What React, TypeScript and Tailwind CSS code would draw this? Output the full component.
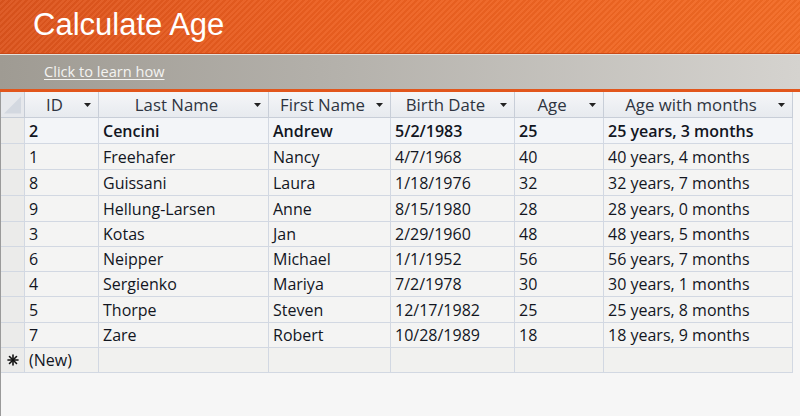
import React from "react";

const rows = [
  ["2", "Cencini", "Andrew", "5/2/1983", "25", "25 years, 3 months"],
  ["1", "Freehafer", "Nancy", "4/7/1968", "40", "40 years, 4 months"],
  ["8", "Guissani", "Laura", "1/18/1976", "32", "32 years, 7 months"],
  ["9", "Hellung-Larsen", "Anne", "8/15/1980", "28", "28 years, 0 months"],
  ["3", "Kotas", "Jan", "2/29/1960", "48", "48 years, 5 months"],
  ["6", "Neipper", "Michael", "1/1/1952", "56", "56 years, 7 months"],
  ["4", "Sergienko", "Mariya", "7/2/1978", "30", "30 years, 1 months"],
  ["5", "Thorpe", "Steven", "12/17/1982", "25", "25 years, 8 months"],
  ["7", "Zare", "Robert", "10/28/1989", "18", "18 years, 9 months"],
];
const heights = [26, 26, 26, 26, 25, 25, 25, 26, 25, 25];
const headers = ["ID", "Last Name", "First Name", "Birth Date", "Age", "Age with months"];

function Arrow() {
  return (
    <svg width="7" height="4" viewBox="0 0 7 4" className="shrink-0">
      <path d="M0 0H7L3.5 4Z" fill="#222" />
    </svg>
  );
}

export default function App() {
  const font = { fontFamily: '"Open Sans", "Noto Sans", sans-serif' };
  return (
    <div className="w-[800px] h-[416px] overflow-hidden bg-[#f6f6f6] flex flex-col" style={font}>
      <div className="h-[54px] shrink-0 flex items-center pl-[33px] bg-[repeating-linear-gradient(135deg,rgba(255,255,255,0.05)_0px,rgba(255,255,255,0.05)_2px,rgba(0,0,0,0.03)_2px,rgba(0,0,0,0.03)_4px),linear-gradient(90deg,#dc541d,#ec5f20_40%,#f26a24)] border-b border-[#c84a18]">
        <span className="text-white text-[31px] leading-none pb-[4px]" style={{ fontFamily: '"Liberation Sans", Arial, sans-serif' }}>
          Calculate Age
        </span>
      </div>
      <div className="h-[35px] shrink-0 border-t border-[#e4e2de] bg-[linear-gradient(90deg,#9f9b93,#b3b0aa_40%,#d5d3cf)] flex items-center pl-[44px]">
        <span className="text-[#f4f4f2] text-[14.6px] underline underline-offset-2 leading-none pb-[2px]">Click to learn how</span>
      </div>
      <div className="h-[3px] shrink-0 bg-[#e2561c]" />
      <div className="flex-1 border-l border-[#9a9a9a] relative">
        <div className="grid grid-cols-[24px_74px_170px_122px_124px_89px_189px] w-[792px]">
          <div className="h-[26px] bg-[#e6e8ec] border-r border-b border-[#c6ccd6] flex items-end justify-end p-[3px]">
            <svg width="18" height="18" viewBox="0 0 18 18">
              <path d="M18 0V18H0Z" fill="#d3d8e0" />
            </svg>
          </div>
          {headers.map((h) => (
            <div
              key={h}
              className="h-[26px] bg-[linear-gradient(180deg,#f5f6f8,#e7eaef)] border-r border-b border-[#c8ced8] flex items-center pr-[7px] text-[16.8px] text-[#2e3440] whitespace-nowrap"
            >
              <span className="flex-1 text-center">{h}</span>
              <Arrow />
            </div>
          ))}
          {rows.map((r, i) => (
            <React.Fragment key={i}>
              <div
                className="bg-[#ebebea] border-r border-b border-[#d2d8e2]"
                style={{ height: heights[i] }}
              />
              {r.map((c, j) => (
                <div
                  key={j}
                  className={`border-r border-b border-[#d2d8e2] flex items-center pl-[4px] text-[16px] text-[#12161f] whitespace-nowrap overflow-hidden ${i === 0 ? "font-semibold bg-[#f3f5f8]" : "bg-[#f4f4f3]"}`}
                  style={{ height: heights[i] }}
                >
                  {c}
                </div>
              ))}
            </React.Fragment>
          ))}
          <div className="h-[25px] bg-[#ebebea] border-r border-b border-[#d2d8e2] flex items-center justify-center">
            <svg width="12" height="12" viewBox="0 0 12 12">
              <g stroke="#111" strokeWidth="1.6" strokeLinecap="round">
                <path d="M6 1V11" />
                <path d="M1 6H11" />
                <path d="M2.5 2.5L9.5 9.5" />
                <path d="M9.5 2.5L2.5 9.5" />
              </g>
            </svg>
          </div>
          <div className="h-[25px] bg-[#f1f1ef] border-r border-b border-[#d2d8e2] flex items-center pl-[4px] text-[16px] text-[#12161f]">
            (New)
          </div>
          {[0, 1, 2, 3, 4].map((k) => (
            <div key={k} className="h-[25px] bg-[#f1f1ef] border-r border-b border-[#d2d8e2]" />
          ))}
        </div>
      </div>
    </div>
  );
}
